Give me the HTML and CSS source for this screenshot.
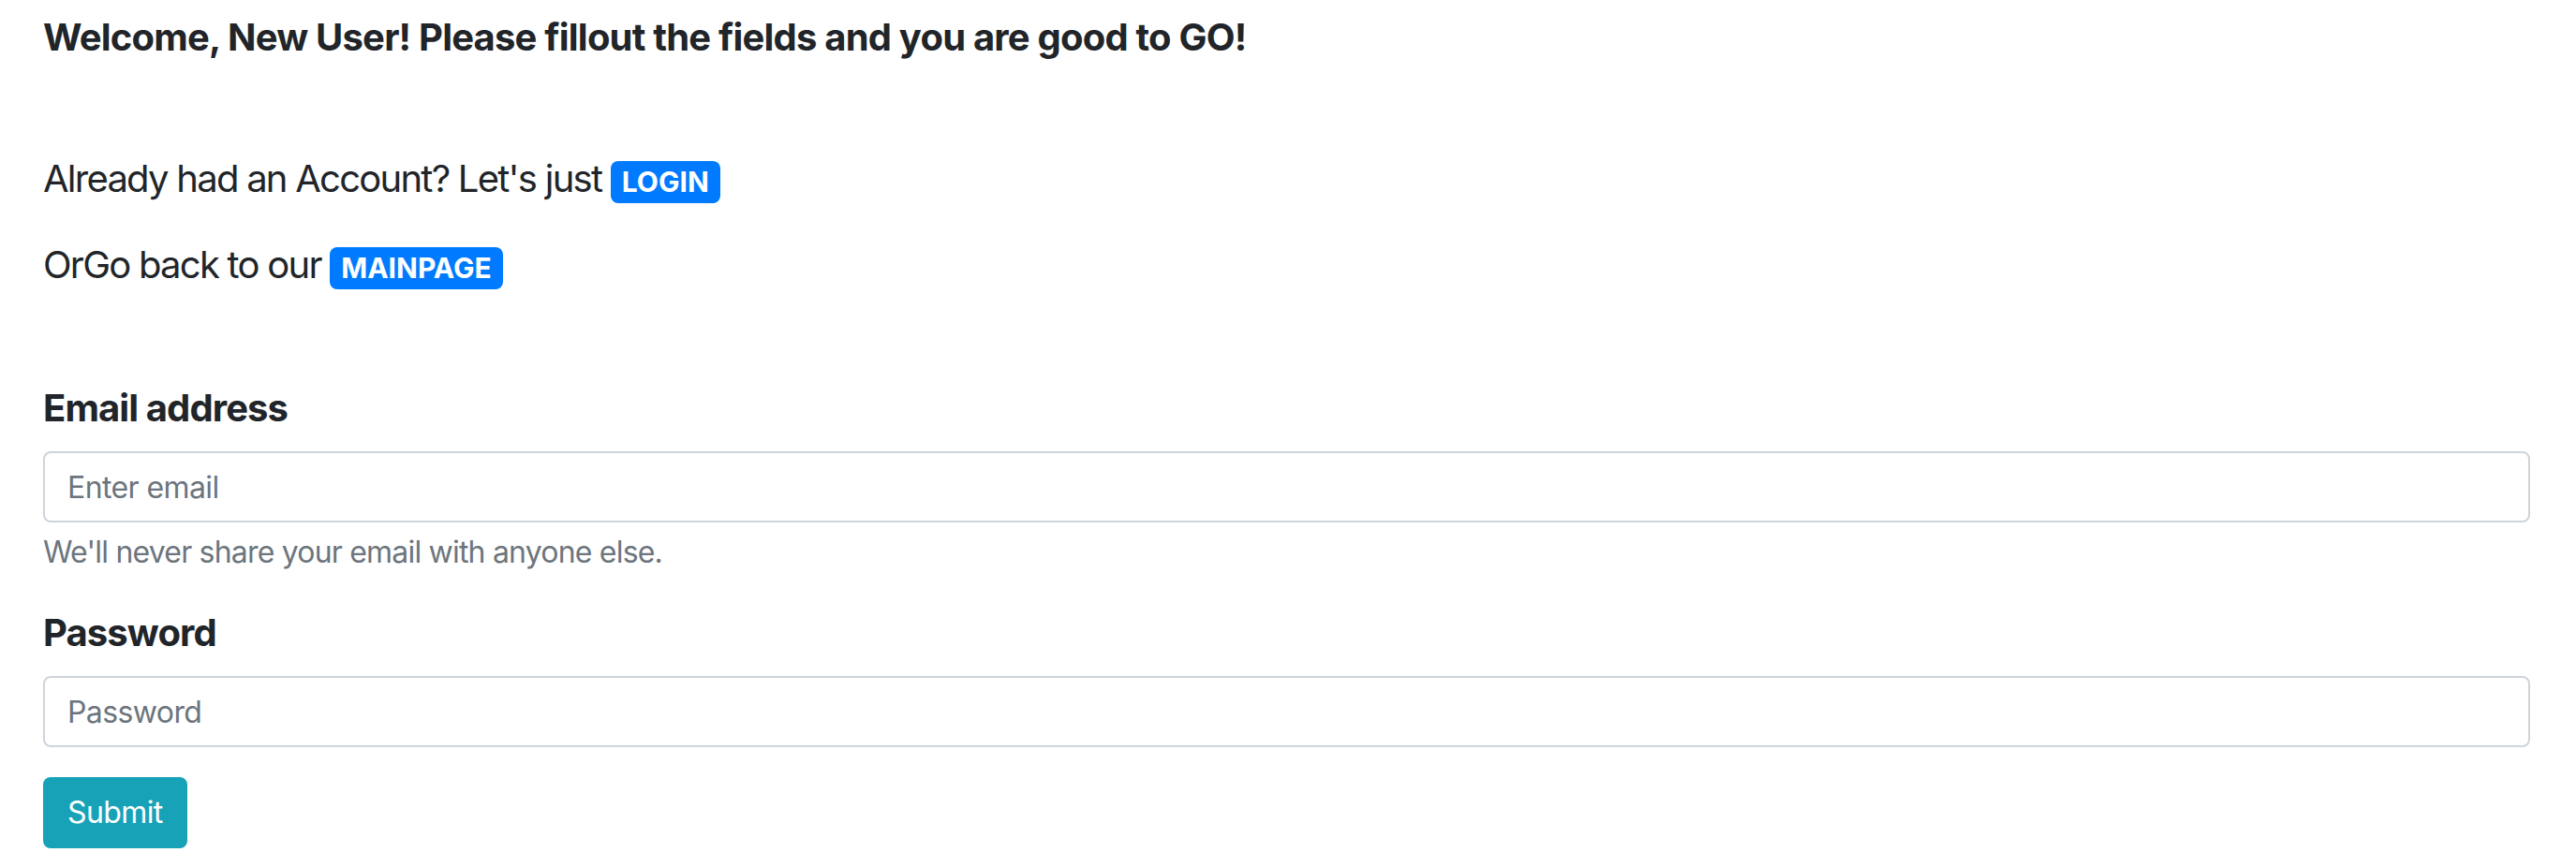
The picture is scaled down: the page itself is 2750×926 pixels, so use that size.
FILE: index.html
```html
<!DOCTYPE html>
<html lang="en">
<head>
<meta charset="utf-8">
<title>Register</title>
<link rel="stylesheet" href="styles.css">
</head>
<body>
<div class="page">
  <h5 class="title">Welcome, New User! Please fillout the fields and you are good to GO!</h5>
  <div class="links">
    <p class="line">Already had an Account? Let's just <a class="badge" href="#">LOGIN</a></p>
    <p class="line">OrGo back to our <a class="badge" href="#">MAINPAGE</a></p>
  </div>
  <form class="form">
    <div class="group">
      <label class="label" for="email">Email address</label>
      <input class="control" id="email" type="email" placeholder="Enter email">
      <small class="help">We'll never share your email with anyone else.</small>
    </div>
    <div class="group">
      <label class="label" for="pw">Password</label>
      <input class="control" id="pw" type="password" placeholder="Password">
    </div>
    <button class="submit" type="submit">Submit</button>
  </form>
</div>
</body>
</html>
```
FILE: styles.css
```css
html, body {
  margin: 0;
  padding: 0;
  background: #ffffff;
}
body {
  font-family: Inter, "Noto Sans", "Liberation Sans", sans-serif;
  color: #212529;
}
.page {
  padding: 16px 49px 16px 46px;
}
.title {
  margin: 0;
  font-size: 40px;
  line-height: 48px;
  font-weight: 700;
  letter-spacing: -0.8px;
}
.links {
  margin-top: 97px;
  display: flex;
  flex-direction: column;
  gap: 32px;
}
.line {
  margin: 0;
  font-size: 40px;
  line-height: 60px;
  font-weight: 400;
  letter-spacing: -1.75px;
}
.badge {
  display: inline-block;
  padding: 7.5px 12px;
  font-size: 30px;
  font-weight: 700;
  line-height: 1;
  letter-spacing: 0;
  border-radius: 8px;
  background: #007bff;
  color: #ffffff;
  text-decoration: none;
  vertical-align: baseline;
}
.form {
  margin-top: 93px;
}
.group {
  margin-bottom: 32px;
}
.label {
  display: block;
  font-size: 40px;
  line-height: 60px;
  font-weight: 700;
  letter-spacing: -0.9px;
  margin-bottom: 16px;
}
.control {
  display: block;
  box-sizing: border-box;
  width: 100%;
  height: 76px;
  padding: 0 24px;
  border: 2px solid #ced4da;
  border-radius: 8px;
  font-family: Inter, "Noto Sans", "Liberation Sans", sans-serif;
  font-size: 32px;
  letter-spacing: -0.6px;
  color: #495057;
  background: #ffffff;
  outline: none;
}
.control::placeholder {
  color: #6c757d;
  opacity: 1;
}
.help {
  display: block;
  margin-top: 8px;
  font-size: 32px;
  line-height: 48px;
  letter-spacing: -0.8px;
  color: #6c757d;
}
.submit {
  display: inline-block;
  box-sizing: border-box;
  height: 76px;
  padding: 0 24px;
  border: 2px solid #17a2b8;
  border-radius: 8px;
  background: #17a2b8;
  color: #ffffff;
  font-family: Inter, "Noto Sans", "Liberation Sans", sans-serif;
  font-size: 32px;
  line-height: 48px;
  font-weight: 400;
  letter-spacing: -0.6px;
  cursor: pointer;
}
```
